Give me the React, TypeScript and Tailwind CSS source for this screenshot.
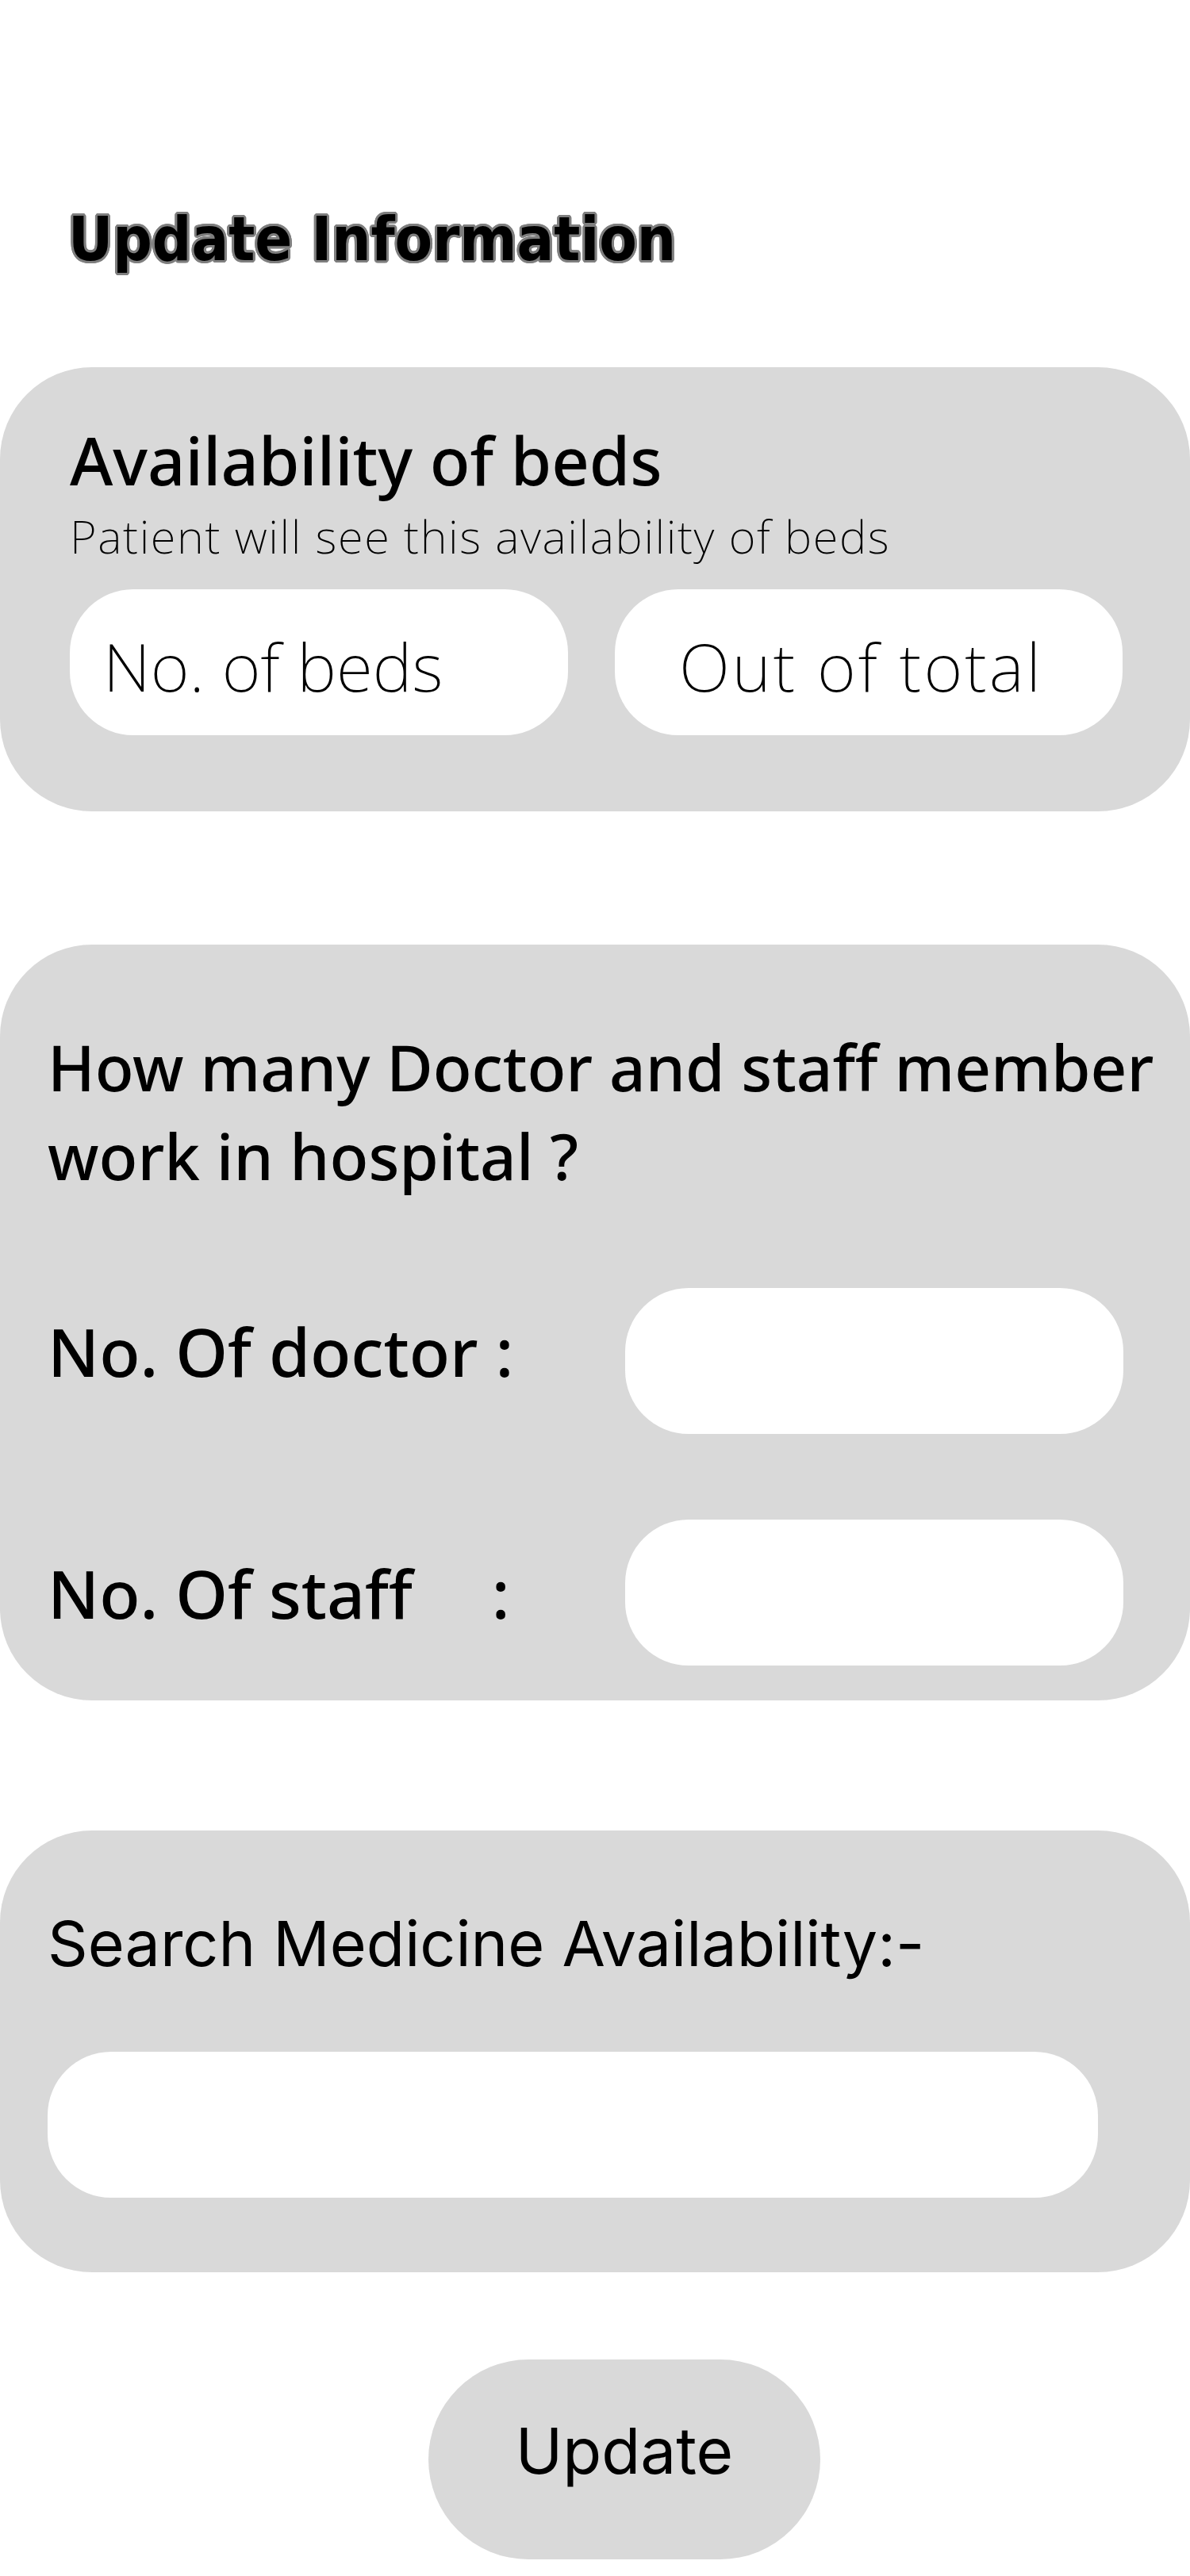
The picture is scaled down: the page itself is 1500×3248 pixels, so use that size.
const noto = "font-['Noto_Sans',sans-serif]";

export default function App() {
  return (
    <main className="min-h-screen bg-white pb-[20px] text-black">
      <h1 className="pl-[86px] pt-[263px] font-['DejaVu_Sans_Condensed','DejaVu_Sans',sans-serif] text-[77px] font-bold leading-none [text-shadow:3px_0_0_#7f7f7f,2.77px_1.15px_0_#7f7f7f,2.12px_2.12px_0_#7f7f7f,1.15px_2.77px_0_#7f7f7f,0_3px_0_#7f7f7f,-1.15px_2.77px_0_#7f7f7f,-2.12px_2.12px_0_#7f7f7f,-2.77px_1.15px_0_#7f7f7f,-3px_0_0_#7f7f7f,-2.77px_-1.15px_0_#7f7f7f,-2.12px_-2.12px_0_#7f7f7f,-1.15px_-2.77px_0_#7f7f7f,0_-3px_0_#7f7f7f,1.15px_-2.77px_0_#7f7f7f,2.12px_-2.12px_0_#7f7f7f,2.77px_-1.15px_0_#7f7f7f]">
        Update Information
      </h1>

      {/* Beds */}
      <section className="mt-[123px] rounded-[116px] bg-[#d9d9d9] pb-[96px] pl-[88px] pr-[85px] pt-[75px]">
        <h2 className={`${noto} text-[83px] font-medium leading-none`}>Availability of beds</h2>
        <p className={`${noto} mt-[26px] text-[58px] font-extralight leading-none tracking-[1.6px]`}>
          Patient will see this availability of beds
        </p>
        <div className="mt-[38px] flex gap-[59px]">
          <input
            placeholder="No. of beds"
            className={`${noto} h-[184px] w-[628px] rounded-[80px] bg-white pl-[42px] pt-[8px] text-[84px] font-extralight leading-none outline-none placeholder:text-black`}
          />
          <input
            placeholder="Out of total"
            className={`${noto} h-[184px] min-w-0 flex-1 rounded-[80px] bg-white pl-[81px] pt-[8px] text-[84px] font-extralight leading-none tracking-[3px] outline-none placeholder:text-black`}
          />
        </div>
      </section>

      {/* Staff */}
      <section className={`${noto} mt-[168px] rounded-[116px] bg-[#d9d9d9] pb-[44px] pl-[60px] pr-[84px] pt-[98px] font-medium`}>
        <p className="whitespace-nowrap text-[80px] leading-[112px]">
          How many Doctor and staff member
          <br />
          work in hospital ?
        </p>
        <div className="mt-[111px] flex items-start justify-between">
          <span className="pt-[38px] text-[84px] leading-none">No. Of doctor :</span>
          <input className="h-[184px] w-[628px] rounded-[80px] bg-white outline-none" />
        </div>
        <div className="mt-[108px] flex items-start justify-between">
          <span className="pt-[51px] text-[84px] leading-none">
            No. Of staff<span className="ml-[100px]">:</span>
          </span>
          <input className="h-[184px] w-[628px] rounded-[80px] bg-white outline-none" />
        </div>
      </section>

      {/* Medicine */}
      <section className="mt-[164px] rounded-[116px] bg-[#d9d9d9] pb-[94px] pl-[60px] pr-[116px] pt-[103px] font-['Inter',sans-serif]">
        <p className="text-[79px] leading-none">Search Medicine Availability:-</p>
        <input className="mt-[97px] h-[184px] w-full rounded-[80px] bg-white outline-none" />
      </section>

      <button className="ml-[540px] mt-[110px] flex h-[252px] w-[494px] items-center justify-center rounded-full bg-[#d9d9d9] pb-[22px] font-['Inter',sans-serif] text-[80px] leading-none">
        Update
      </button>
    </main>
  );
}
